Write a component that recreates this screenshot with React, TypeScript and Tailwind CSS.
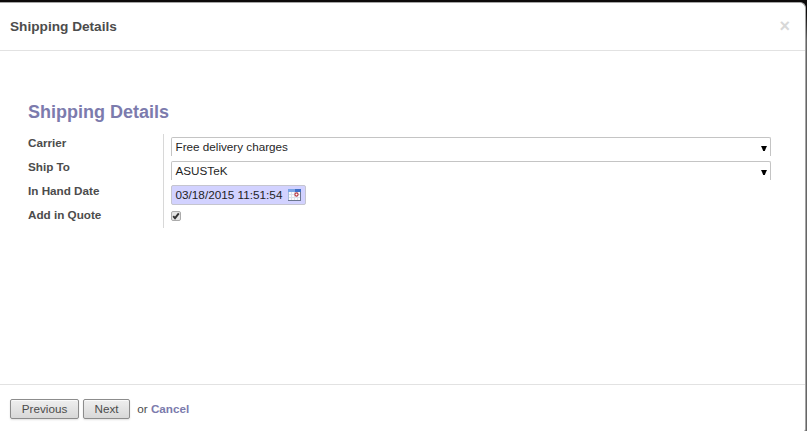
import type { ReactNode } from "react";

function Field({ label, children }: { label: string; children: ReactNode }) {
  return (
    <div className="flex h-6 last:h-[22px]">
      <div className="w-[135px] shrink-0 text-[11.7px] leading-[18px] font-bold text-[#4c4c4c]">{label}</div>
      <div className="flex grow items-start border-l border-[#d8d8d8] pt-[3px] pl-[7px]">{children}</div>
    </div>
  );
}

function Select({ value }: { value: string }) {
  return (
    <div className="flex h-[19px] w-[600px] items-start justify-between rounded-t-[2px] border border-b-0 border-[#c4c4c4] bg-white pr-[3px] pl-[3.5px]">
      <span className="text-[11.7px] leading-[17px] text-[#1f1f1f]">{value}</span>
      <svg className="mt-2 h-[6px] w-[6px]" viewBox="0 0 6 6">
        <path d="M0 0h6L5 2 3.8 5H2.2L1 2z" fill="#000" />
      </svg>
    </div>
  );
}

function CalendarIcon() {
  return (
    <svg className="mt-[3px] ml-[5px] h-3 w-[13px]" viewBox="0 0 13 12">
      <path fill="#a9bbd9" d="M0 0h13v12H0z" />
      <path fill="#7ba5e6" d="M0 0h13v3H0z" />
      <path fill="#3d6fc6" d="M7 0h6v3H7z" />
      <path fill="#fafbfd" d="M1 3h11v8H1z" />
      <path fill="#dce2ec" d="M1 5h11v1H1zM1 8h11v1H1zM3 3h1v8H3zM6 3h1v8H6zM9 3h1v8H9z" />
      <path fill="#6b7690" d="M12 3h1v9H0v-1h12z" />
      <circle cx="8.5" cy="5.5" r="1.6" fill="#fff" stroke="#b6313d" strokeWidth="1.1" />
    </svg>
  );
}

function Button({ children, width }: { children: ReactNode; width: string }) {
  return (
    <button className={`${width} h-5 rounded-[2px] border border-[#8c8c8c] bg-linear-to-b from-[#efefef] to-[#d8d8d8] text-[11.7px] leading-[18px] text-[#4c4c4c] shadow-[0_1px_2px_rgba(0,0,0,0.12),inset_0_1px_0_rgba(255,255,255,0.7)]`}>
      {children}
    </button>
  );
}

export default function App() {
  return (
    <div className="h-[431px] w-[807px] overflow-hidden bg-linear-to-b from-[#0c0a0a] from-[12px] to-[#666] to-[40px] pt-[2px] font-['Liberation_Sans',Arial,sans-serif] text-[#4c4c4c]">
      <div className="flex h-[429px] w-[806px] flex-col rounded-tr-[6px] rounded-br-[2px] border-t border-r border-[#a5a5a5] bg-white">
        <header className="flex h-12 shrink-0 items-center justify-between border-b border-[#e2e2e2] pr-[15px] pl-[10px]">
          <h1 className="text-[13.65px] leading-5 font-bold">Shipping Details</h1>
          <button className="pb-[2px] text-[18px] leading-5 font-bold text-[#d8d8d8]">×</button>
        </header>
        <main className="grow px-7 pt-[50px]">
          <h2 className="h-[33px] text-[18px] leading-[22px] font-bold text-[#7c7bad]">Shipping Details</h2>
          <Field label="Carrier"><Select value="Free delivery charges" /></Field>
          <Field label="Ship To"><Select value="ASUSTeK" /></Field>
          <Field label="In Hand Date">
            <div className="flex h-5 w-[135px] rounded-[2px] border border-[#c5c5cf] bg-[#d2d2ff] pl-[3.5px]">
              <span className="w-[107.5px] text-[11.75px] leading-[17px] whitespace-nowrap text-[#1f1f1f]">03/18/2015 11:51:54</span>
              <CalendarIcon />
            </div>
          </Field>
          <Field label="Add in Quote">
            <svg className="mt-[2px] h-[10px] w-[10px]" viewBox="0 0 10 10">
              <rect x=".5" y=".5" width="9" height="9" rx="1.5" fill="#e4e4e4" stroke="#ababab" />
              <path d="M2.2 5.2 4 7.2 7.8 2.4" fill="none" stroke="#333" strokeWidth="1.9" />
            </svg>
          </Field>
        </main>
        <footer className="flex h-[47px] shrink-0 items-start border-t border-[#e2e2e2] pt-[14px] pl-[10px] text-[11.7px] leading-5">
          <Button width="w-[69px]">Previous</Button>
          <span className="w-1" />
          <Button width="w-[47px]">Next</Button>
          <span className="ml-[7.3px]">or</span>
          <a className="ml-[3.2px] font-bold text-[#7c7bad]">Cancel</a>
        </footer>
      </div>
    </div>
  );
}
